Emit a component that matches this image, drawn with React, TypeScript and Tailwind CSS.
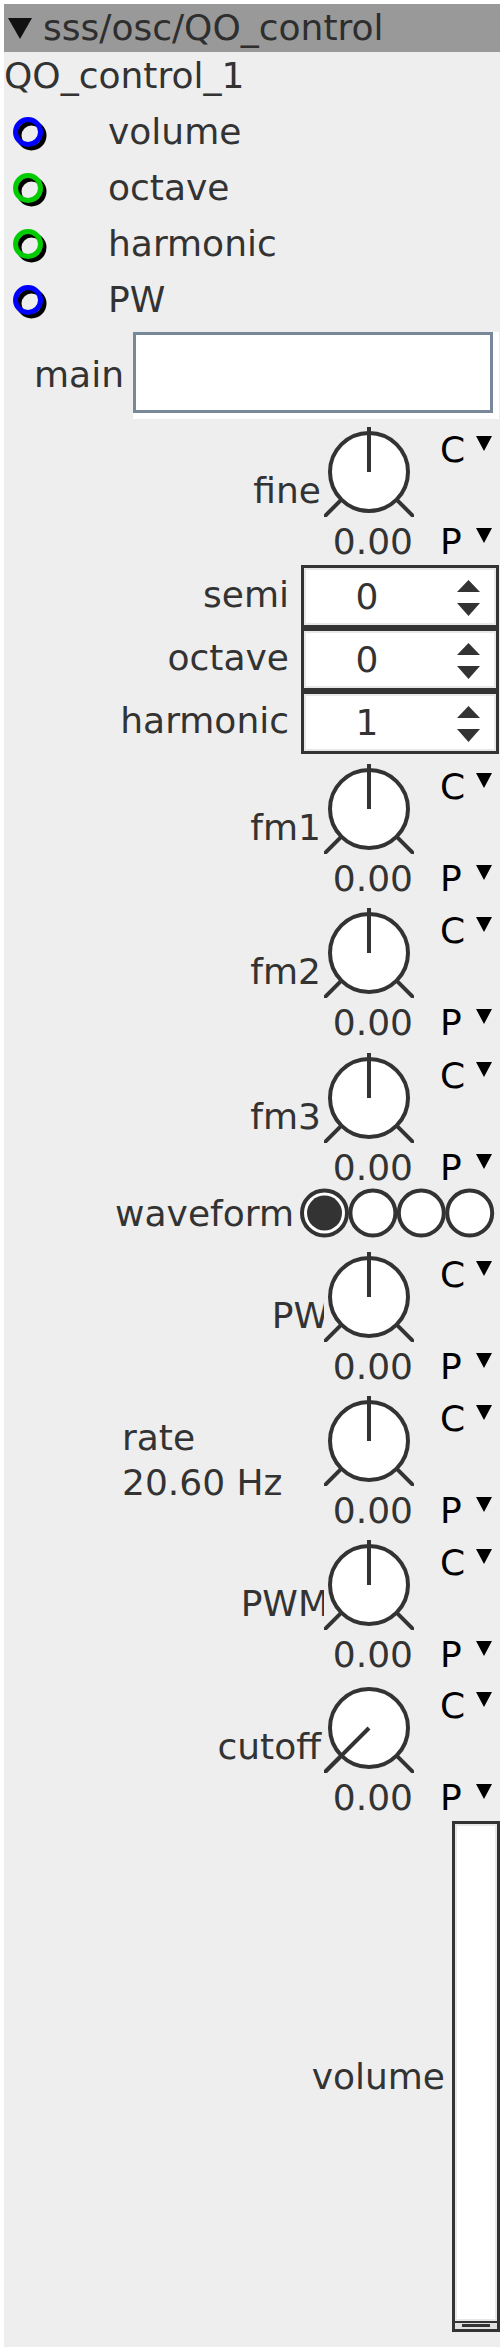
import React from 'react';

const ports = [
  { name: 'volume', color: '#0000ff' },
  { name: 'octave', color: '#00cc00' },
  { name: 'harmonic', color: '#00cc00' },
  { name: 'PW', color: '#0000ff' },
];

function PortRing({ color }: { color: string }) {
  return (
    <svg width="34" height="34" viewBox="0 0 34 34" className="block mt-[4px]">
      <circle cx="18.5" cy="18.5" r="12.5" fill="none" stroke="#000" strokeWidth="5" />
      <circle cx="15" cy="15" r="12.5" fill="none" stroke={color} strokeWidth="5" />
    </svg>
  );
}

function DropArrow() {
  return (
    <svg width="16" height="15" viewBox="0 0 16 15" className="block mt-[7px]">
      <polygon points="0,0 16,0 8,15" fill="#000" />
    </svg>
  );
}

function KnobSvg({ atMin }: { atMin?: boolean }) {
  return (
    <svg width="90" height="90" viewBox="0 0 90 90" className="block">
      <line x1="17.4" y1="72.6" x2="0" y2="90" stroke="#333" strokeWidth="4" />
      <line x1="72.6" y1="72.6" x2="90" y2="90" stroke="#333" strokeWidth="4" />
      <circle cx="45" cy="45" r="39" fill="#fff" stroke="#333" strokeWidth="4" />
      {atMin ? (
        <line x1="45" y1="45" x2="0" y2="90" stroke="#333" strokeWidth="4" />
      ) : (
        <line x1="45" y1="45" x2="45" y2="0" stroke="#333" strokeWidth="4" />
      )}
    </svg>
  );
}

function Knob({
  label,
  sub,
  atMin,
  shifted,
  className = '',
}: {
  label: string;
  sub?: string;
  atMin?: boolean;
  shifted?: boolean;
  className?: string;
}) {
  return (
    <div className={`flex h-[136px] shrink-0 ${className}`}>
      {sub ? (
        <div className="flex-1 pl-[118px] pt-[19px] leading-[45px] whitespace-nowrap">
          <div>{label}</div>
          <div>{sub}</div>
        </div>
      ) : (
        <div className="flex-1 overflow-hidden">
          <div
            className={`pt-[43px] pr-[3px] text-right whitespace-nowrap ${shifted ? 'translate-x-[8px]' : ''}`}
          >
            {label}
          </div>
        </div>
      )}
      <div className="w-[90px]">
        <KnobSvg atMin={atMin} />
        <div className="pt-[4px] pr-[1px] text-right">0.00</div>
      </div>
      <div className="w-[86px] pl-[26px] text-black">
        <div className="flex h-[42px] mt-[2px]">
          <span className="w-[36px]">C</span>
          <DropArrow />
        </div>
        <div className="flex h-[42px] mt-[50px]">
          <span className="w-[36px]">P</span>
          <DropArrow />
        </div>
      </div>
    </div>
  );
}

function SpinRow({ label, value }: { label: string; value: string }) {
  return (
    <div className="flex h-[63px] shrink-0">
      <div className="flex-1 pt-[9px] pr-[12px] text-right">{label}</div>
      <div className="w-[198px] h-full border-[3px] border-[#333]">
        <div className="flex h-full border-2 border-[#e8e8e8] bg-white">
          <div className="w-[122px] pt-[6px] text-center">{value}</div>
          <svg width="23" height="36" viewBox="0 0 23 36" className="block ml-[29px] mt-[10px]">
            <polygon points="11.5,0 23,12 0,12" fill="#333" />
            <polygon points="0,23 23,23 11.5,36" fill="#333" />
          </svg>
        </div>
      </div>
      <div className="w-[1px]" />
    </div>
  );
}

function WaveformRow() {
  const xs = [0, 1, 2, 3].map((i) => 24.5 + i * 48.4);
  return (
    <div className="flex h-[55px] shrink-0">
      <div className="flex-1 pt-[4px] pr-[6px] text-right">waveform</div>
      <svg width="196" height="50" viewBox="0 0 196 50" className="block -mt-[1px]">
        {xs.map((x) => (
          <circle key={x} cx={x} cy="25" r="22.5" fill="#fff" stroke="#333" strokeWidth="4" />
        ))}
        <circle cx={xs[0]} cy="25" r="17.5" fill="#333" />
      </svg>
      <div className="w-[4px]" />
    </div>
  );
}

export default function App() {
  return (
    <div className="w-[504px] h-[2352px] bg-white pt-[4px] pl-[4px] font-['DejaVu_Sans',sans-serif] text-[36px] leading-[42px] text-[#333]">
      <div className="w-[496px] h-[2343px] bg-[#eeeeee] flex flex-col overflow-hidden">
        {/* title bar */}
        <div className="flex items-center h-[48px] shrink-0 bg-[#999999] pl-[4px]">
          <svg width="24" height="21" viewBox="0 0 24 21" className="block">
            <polygon points="0,0 24,0 12,21" fill="#111" />
          </svg>
          <span className="ml-[11px] text-[#2e2e2e]">sss/osc/QO_control</span>
        </div>

        <div className="h-[52px] shrink-0 pt-[3px]">QO_control_1</div>

        {ports.map((p) => (
          <div key={p.name} className="flex items-center h-[56px] shrink-0">
            <div className="w-[104px] pl-[9px]">
              <PortRing color={p.color} />
            </div>
            <span>{p.name}</span>
          </div>
        ))}

        {/* main input */}
        <div className="flex h-[91px] shrink-0 pt-[4px]">
          <div className="w-[129px] pt-[22px] pr-[9px] text-right">main</div>
          <div className="border-r-[6px] border-b-[6px] border-white">
            <div className="w-[360px] h-[81px] border-[3px] border-[#778899] bg-white" />
          </div>
        </div>

        <Knob label="fine" className="mt-[8px]" />

        <div className="mt-[2px]" />
        <SpinRow label="semi" value="0" />
        <SpinRow label="octave" value="0" />
        <SpinRow label="harmonic" value="1" />

        <Knob label="fm1" className="mt-[10px]" />
        <Knob label="fm2" className="mt-[8px]" />
        <Knob label="fm3" className="mt-[9px]" />

        <WaveformRow />

        <Knob label="PW" shifted className="mt-[8px]" />
        <Knob label="rate" sub="20.60 Hz" className="mt-[8px]" />
        <Knob label="PWM" shifted className="mt-[8px]" />
        <Knob label="cutoff" atMin className="mt-[7px]" />

        {/* volume slider */}
        <div className="flex items-center h-[511px] shrink-0 mt-[2px]">
          <div className="flex-1 pr-[7px] text-right">volume</div>
          <div className="flex flex-col w-[48px] h-full border-[3px] border-[#333]">
            <div className="flex-1 border-2 border-[#e8e8e8] bg-white" />
            <div className="h-[8px] border-t-2 border-[#333] bg-[#e0e0e0]">
              <div className="mx-auto mt-[1px] w-[28px] h-[3px] bg-[#333]" />
            </div>
          </div>
        </div>
      </div>
    </div>
  );
}
